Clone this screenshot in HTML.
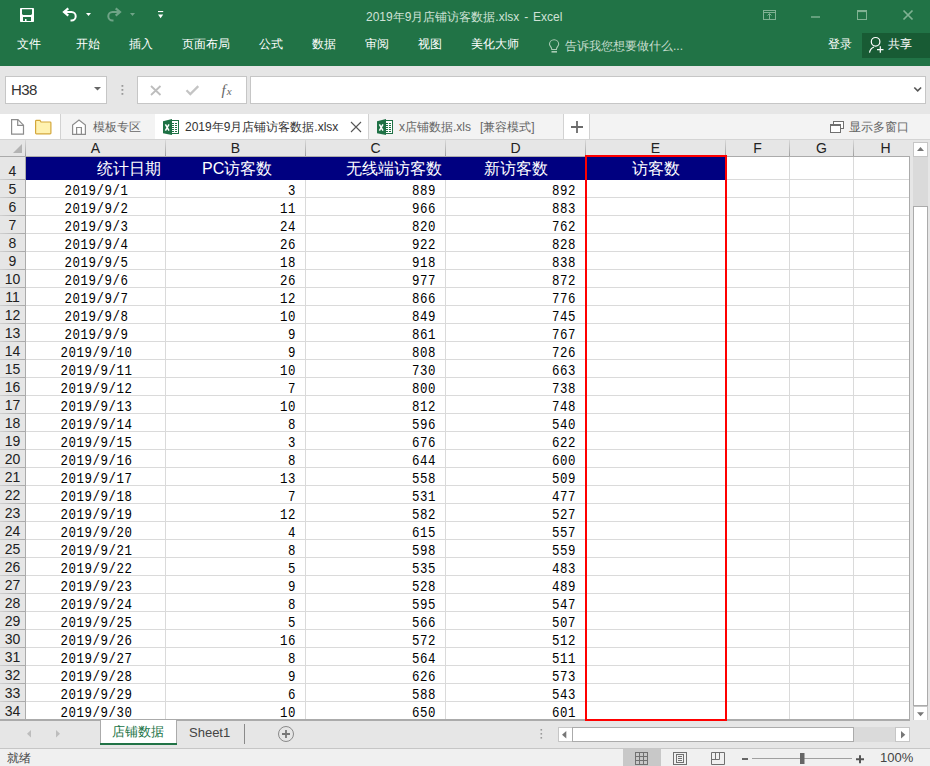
<!DOCTYPE html>
<html><head><meta charset="utf-8"><style>
*{margin:0;padding:0;box-sizing:border-box}
html,body{width:930px;height:766px;overflow:hidden;background:#e6e6e6;font-family:"Liberation Sans",sans-serif;position:relative}
div,span,svg{position:absolute}
#titlebar{left:0;top:0;width:930px;height:66px;background:#217346}
.title{left:366px;top:9px;font-size:12px;word-spacing:1.5px;color:#cfe2d6;white-space:nowrap;line-height:16px}
.rtab{top:36px;font-size:12px;color:#fff;white-space:nowrap;line-height:17px}
.tell{left:565px;top:38px;font-size:12px;color:#c7ddcf;white-space:nowrap;line-height:17px}
#share{left:862px;top:33px;width:68px;height:25px;background:#185b34}
.box{background:#fff;border:1px solid #c6c6c6}
#tabs{left:0;top:114px;width:930px;height:25px;background:#f3f3f3}
.tb{top:114px;height:25px}
.dt{top:115px;height:25px;white-space:nowrap;font-size:12px;color:#666;line-height:25px}
.tsep{top:114px;width:1px;height:25px;background:#d2d2d2}
.colhdr{left:0;top:139px;width:910px;height:18px;background:#e6e6e6;border-top:1px solid #d4d4d4;border-bottom:1px solid #ababab}
.ch{top:140px;height:16px;text-align:center;font-size:14px;line-height:16px;color:#222}
.chsep{top:140px;width:1px;height:16px;background:linear-gradient(#d8d8d8,#a0a0a0)}
.rh{left:0;width:25px;height:17px;text-align:center;font-size:14px;line-height:18px;color:#222}
.rhsep{left:0;width:25px;height:1px;background:linear-gradient(90deg,#d0d0d0,#a8a8a8)}
.rhcol{left:0;top:157px;width:26px;height:563px;background:#e6e6e6;border-right:1px solid #ababab}
.cells{left:26px;top:157px;width:884px;height:563px;background:#fff}
.hl{left:26px;width:883px;height:1px;background:#dadada}
.vl{top:157px;width:1px;height:562px;background:#dadada}
.navy{left:26px;top:157px;width:699px;height:23px;background:#000080}
.ht{top:159px;font-size:16px;line-height:20px;color:#fff;white-space:nowrap}
.cell{height:17px;margin-top:2px;font-family:"Liberation Mono",monospace;font-size:14.6px;line-height:18px;letter-spacing:0.65px;color:#000;transform:scaleX(0.85);white-space:nowrap}
.ca{left:27px;width:139px;text-align:center;transform-origin:center}
.cb{left:166px;width:130px;text-align:right;transform-origin:right}
.cc{left:306px;width:130px;text-align:right;transform-origin:right}
.cd{left:446px;width:130px;text-align:right;transform-origin:right}
.sel{left:585px;top:155px;width:142px;height:566px;border:2px solid #ff0000}
.gridborder{left:909px;top:156px;width:1px;height:564px;background:#ababab}

</style></head><body>
<div id="titlebar"></div>
<div class="title">2019年9月店铺访客数据.xlsx - Excel</div>
<div class="rtab" style="left:17px">文件</div>
<div class="rtab" style="left:76px">开始</div>
<div class="rtab" style="left:129px">插入</div>
<div class="rtab" style="left:182px">页面布局</div>
<div class="rtab" style="left:259px">公式</div>
<div class="rtab" style="left:312px">数据</div>
<div class="rtab" style="left:365px">审阅</div>
<div class="rtab" style="left:418px">视图</div>
<div class="rtab" style="left:471px">美化大师</div>
<div class="tell">告诉我您想要做什么...</div>
<div class="rtab" style="left:828px">登录</div>
<div id="share"></div>
<div class="rtab" style="left:888px">共享</div>
<!-- formula bar -->
<div class="box" style="left:5px;top:76px;width:102px;height:28px"></div>
<div style="left:11px;top:81px;font-size:15px;line-height:18px;letter-spacing:-0.6px;color:#333">H38</div>
<div class="box" style="left:137px;top:76px;width:110px;height:28px"></div>
<div class="box" style="left:250px;top:76px;width:676px;height:28px"></div>
<!-- tabs -->
<div id="tabs"></div>
<div class="tb" style="left:0;width:60px;background:#fff"></div>
<div class="tsep" style="left:60px"></div>
<div class="tb" style="left:155px;width:213px;background:#fff"></div>
<div class="tsep" style="left:368px"></div>
<div class="tsep" style="left:563px"></div>
<div class="tb" style="left:564px;width:25px;background:#fff"></div>
<div class="tsep" style="left:589px"></div>
<div class="dt" style="left:93px">模板专区</div>
<div class="dt" style="left:185px;color:#333">2019年9月店铺访客数据.xlsx</div>
<div class="dt" style="left:399px">x店铺数据.xls</div><div class="dt" style="left:480px">[兼容模式]</div>
<div class="dt" style="left:849px">显示多窗口</div>
<svg style="left:0;top:0" width="930" height="140" viewBox="0 0 930 140">
 <!-- save -->
 <rect x="20" y="8" width="14" height="14" rx="0.8" fill="#fff"/>
 <path fill="#217346" d="M22 9.2h10v4.8l-1 1h-8l-1-1z"/>
 <path fill="#217346" d="M23 17h8v4h-4.5v-2h-1.5v2H23z"/>
 <!-- undo -->
 <path d="M68.3 8.3L64 12L68.3 15.7" fill="none" stroke="#fff" stroke-width="2.2" stroke-linejoin="miter"/>
 <path d="M64.5 12H71.5A4.2 4.2 0 0 1 71.5 20.4H70.5" fill="none" stroke="#fff" stroke-width="2"/>
 <path d="M86 13h5l-2.5 3z" fill="#fff"/>
 <!-- redo -->
 <g opacity="0.35">
 <path d="M115.7 8.3L120 12L115.7 15.7" fill="none" stroke="#fff" stroke-width="2.2"/>
 <path d="M119.5 12H112.5A4.2 4.2 0 0 0 112.5 20.4H113.5" fill="none" stroke="#fff" stroke-width="2"/>
 <path d="M130 13h5l-2.5 3z" fill="#fff"/>
 </g>
 <!-- customize -->
 <rect x="158" y="11" width="5.2" height="1.1" fill="#fff"/>
 <path d="M158 14.6h5.2l-2.6 3.6z" fill="#fff"/>
 <!-- window controls -->
 <g fill="none" stroke="#80b293" stroke-width="1">
  <rect x="763.5" y="10.5" width="12" height="9"/>
  <path d="M763.5 12.5h12M769.5 14v6M767.5 15.5l2-2 2 2"/>
  <rect x="857.5" y="10.5" width="9" height="9"/>
  <path d="M857.5 11.3h9" stroke-width="1.6"/>
  <path d="M903.5 10.5l9 9M912.5 10.5l-9 9" stroke-width="1.7"/>
 </g>
 <rect x="811" y="16.3" width="9" height="1.4" fill="#80b293"/>
 <!-- lightbulb -->
 <g fill="none" stroke="#a9cbb5" stroke-width="1.1">
  <path d="M551.8 49.5C551.8 47 549.5 46 549.5 44.3A4.6 4.6 0 0 1 558.7 44.3C558.7 46 556.4 47 556.4 49.5z"/>
 </g>
 <rect x="551.5" y="51" width="5.5" height="1.6" fill="#a9cbb5"/>
 <!-- person -->
 <g fill="none" stroke="#fff" stroke-width="1.2">
  <circle cx="875.6" cy="41.8" r="4.3"/>
  <path d="M869.5 52.6A7.5 7.5 0 0 1 874 47"/>
  <path d="M877 49.6h6.5M880.3 46.3v6.5"/>
 </g>
 <!-- namebox arrow -->
 <path d="M94 87h7l-3.5 3.5z" fill="#666"/>
 <!-- dots -->
 <rect x="121.5" y="85" width="1.8" height="1.8" fill="#999"/>
 <rect x="121.5" y="89" width="1.8" height="1.8" fill="#999"/>
 <rect x="121.5" y="93" width="1.8" height="1.8" fill="#999"/>
 <!-- cancel / enter -->
 <path d="M151 86l9.5 9M160.5 86l-9.5 9" stroke="#bdbdbd" stroke-width="1.8" fill="none"/>
 <path d="M186.5 90.3l3.8 3.8l8-8" stroke="#c4c4c4" stroke-width="2.2" fill="none"/>
 <text x="221.5" y="94.5" font-family="Liberation Serif" font-style="italic" font-size="15" fill="#666">f</text>
 <text x="226.8" y="95" font-family="Liberation Serif" font-style="italic" font-size="11" fill="#666">x</text>
 <!-- chevron -->
 <path d="M914.3 87.5l3.4 3.4l3.4-3.4" stroke="#555" stroke-width="1.6" fill="none"/>
 <!-- new doc -->
 <path d="M11.6 119.6h6.3l5.6 5.6v9H11.6z" fill="#fff" stroke="#8c8c8c" stroke-width="1.2"/>
 <path d="M17.7 119.6v5.7h5.8" fill="none" stroke="#8c8c8c" stroke-width="1.2"/>
 <!-- folder -->
 <path d="M35.6 121.2a0.8 0.8 0 0 1 0.8-0.8h3.6l1 1.6h9.1a0.8 0.8 0 0 1 0.8 0.8v10.2a0.8 0.8 0 0 1-0.8 0.8H36.4a0.8 0.8 0 0 1-0.8-0.8z" fill="#fff2b0" stroke="#d4a73a" stroke-width="1.2"/>
 <!-- home -->
 <path d="M72.6 134.3V125.1L79 120l6.4 5.1v9.2z" fill="#fff" stroke="#8c8c8c" stroke-width="1.2"/>
 <path d="M76.6 134.3v-6.8h4.8v6.8" fill="none" stroke="#8c8c8c" stroke-width="1.2"/>
 <!-- excel icons -->
 <g>
  <rect x="171" y="120" width="8" height="14" fill="#1e7145"/>
  <rect x="172" y="121" width="6" height="12" fill="#fff"/>
  <g fill="#1e7145"><rect x="172" y="123" width="2" height="1"/><rect x="175" y="123" width="2" height="1"/><rect x="172" y="125" width="2" height="1"/><rect x="175" y="125" width="2" height="1"/><rect x="172" y="127" width="2" height="1"/><rect x="175" y="127" width="2" height="1"/><rect x="172" y="129" width="2" height="1"/><rect x="175" y="129" width="2" height="1"/><rect x="172" y="131" width="2" height="1"/><rect x="175" y="131" width="2" height="1"/></g>
  <path d="M163 121.3L172 119v16l-9-1.8z" fill="#1e7145"/>
  <path d="M165.4 124.3l3.6 6.4M169 124.3l-3.6 6.4" stroke="#fff" stroke-width="1.5" fill="none"/>
 </g>
 <g transform="translate(214 0)">
  <rect x="171" y="120" width="8" height="14" fill="#1e7145"/>
  <rect x="172" y="121" width="6" height="12" fill="#fff"/>
  <g fill="#1e7145"><rect x="172" y="123" width="2" height="1"/><rect x="175" y="123" width="2" height="1"/><rect x="172" y="125" width="2" height="1"/><rect x="175" y="125" width="2" height="1"/><rect x="172" y="127" width="2" height="1"/><rect x="175" y="127" width="2" height="1"/><rect x="172" y="129" width="2" height="1"/><rect x="175" y="129" width="2" height="1"/><rect x="172" y="131" width="2" height="1"/><rect x="175" y="131" width="2" height="1"/></g>
  <path d="M163 121.3L172 119v16l-9-1.8z" fill="#1e7145"/>
  <path d="M165.4 124.3l3.6 6.4M169 124.3l-3.6 6.4" stroke="#fff" stroke-width="1.5" fill="none"/>
 </g>
 
 <!-- close tab -->
 <path d="M351 122l10 10M361 122l-10 10" stroke="#555" stroke-width="1.1" fill="none"/>
 <!-- plus tab -->
 <path d="M571 127h12M577 121v12" stroke="#6b6b6b" stroke-width="1.8" fill="none"/>
 <!-- restore windows -->
 <rect x="833.5" y="121.5" width="10" height="7" fill="#fff" stroke="#707070" stroke-width="1"/>
 <rect x="830.5" y="124.5" width="10" height="8" fill="#fff" stroke="#707070" stroke-width="1"/>
 <rect x="830" y="124" width="11" height="2" fill="#707070"/>
 <!-- corner triangle -->
 <path d="M13 153h9v-9z" fill="#b4b4b4"/>
</svg>

<div class="colhdr"></div>
<div class="rhcol"></div>
<div class="cells"></div>
<div class="chsep" style="left:25px"></div>
<div class="ch" style="left:26px;width:139px">A</div>
<div class="chsep" style="left:165px"></div>
<div class="ch" style="left:166px;width:139px">B</div>
<div class="chsep" style="left:305px"></div>
<div class="ch" style="left:306px;width:139px">C</div>
<div class="chsep" style="left:445px"></div>
<div class="ch" style="left:446px;width:139px">D</div>
<div class="chsep" style="left:585px"></div>
<div class="ch" style="left:586px;width:139px">E</div>
<div class="chsep" style="left:725px"></div>
<div class="ch" style="left:726px;width:63px">F</div>
<div class="chsep" style="left:789px"></div>
<div class="ch" style="left:790px;width:63px">G</div>
<div class="chsep" style="left:853px"></div>
<div class="ch" style="left:854px;width:63px">H</div>
<div class="rh" style="top:157px;height:22px;line-height:28px">4</div>
<div class="rhsep" style="top:179px"></div>
<div class="rh" style="top:180px">5</div>
<div class="rhsep" style="top:197px"></div>
<div class="rh" style="top:198px">6</div>
<div class="rhsep" style="top:215px"></div>
<div class="rh" style="top:216px">7</div>
<div class="rhsep" style="top:233px"></div>
<div class="rh" style="top:234px">8</div>
<div class="rhsep" style="top:251px"></div>
<div class="rh" style="top:252px">9</div>
<div class="rhsep" style="top:269px"></div>
<div class="rh" style="top:270px">10</div>
<div class="rhsep" style="top:287px"></div>
<div class="rh" style="top:288px">11</div>
<div class="rhsep" style="top:305px"></div>
<div class="rh" style="top:306px">12</div>
<div class="rhsep" style="top:323px"></div>
<div class="rh" style="top:324px">13</div>
<div class="rhsep" style="top:341px"></div>
<div class="rh" style="top:342px">14</div>
<div class="rhsep" style="top:359px"></div>
<div class="rh" style="top:360px">15</div>
<div class="rhsep" style="top:377px"></div>
<div class="rh" style="top:378px">16</div>
<div class="rhsep" style="top:395px"></div>
<div class="rh" style="top:396px">17</div>
<div class="rhsep" style="top:413px"></div>
<div class="rh" style="top:414px">18</div>
<div class="rhsep" style="top:431px"></div>
<div class="rh" style="top:432px">19</div>
<div class="rhsep" style="top:449px"></div>
<div class="rh" style="top:450px">20</div>
<div class="rhsep" style="top:467px"></div>
<div class="rh" style="top:468px">21</div>
<div class="rhsep" style="top:485px"></div>
<div class="rh" style="top:486px">22</div>
<div class="rhsep" style="top:503px"></div>
<div class="rh" style="top:504px">23</div>
<div class="rhsep" style="top:521px"></div>
<div class="rh" style="top:522px">24</div>
<div class="rhsep" style="top:539px"></div>
<div class="rh" style="top:540px">25</div>
<div class="rhsep" style="top:557px"></div>
<div class="rh" style="top:558px">26</div>
<div class="rhsep" style="top:575px"></div>
<div class="rh" style="top:576px">27</div>
<div class="rhsep" style="top:593px"></div>
<div class="rh" style="top:594px">28</div>
<div class="rhsep" style="top:611px"></div>
<div class="rh" style="top:612px">29</div>
<div class="rhsep" style="top:629px"></div>
<div class="rh" style="top:630px">30</div>
<div class="rhsep" style="top:647px"></div>
<div class="rh" style="top:648px">31</div>
<div class="rhsep" style="top:665px"></div>
<div class="rh" style="top:666px">32</div>
<div class="rhsep" style="top:683px"></div>
<div class="rh" style="top:684px">33</div>
<div class="rhsep" style="top:701px"></div>
<div class="rh" style="top:702px">34</div>
<div class="rhsep" style="top:719px"></div>
<div class="hl" style="top:179px"></div>
<div class="hl" style="top:197px"></div>
<div class="hl" style="top:215px"></div>
<div class="hl" style="top:233px"></div>
<div class="hl" style="top:251px"></div>
<div class="hl" style="top:269px"></div>
<div class="hl" style="top:287px"></div>
<div class="hl" style="top:305px"></div>
<div class="hl" style="top:323px"></div>
<div class="hl" style="top:341px"></div>
<div class="hl" style="top:359px"></div>
<div class="hl" style="top:377px"></div>
<div class="hl" style="top:395px"></div>
<div class="hl" style="top:413px"></div>
<div class="hl" style="top:431px"></div>
<div class="hl" style="top:449px"></div>
<div class="hl" style="top:467px"></div>
<div class="hl" style="top:485px"></div>
<div class="hl" style="top:503px"></div>
<div class="hl" style="top:521px"></div>
<div class="hl" style="top:539px"></div>
<div class="hl" style="top:557px"></div>
<div class="hl" style="top:575px"></div>
<div class="hl" style="top:593px"></div>
<div class="hl" style="top:611px"></div>
<div class="hl" style="top:629px"></div>
<div class="hl" style="top:647px"></div>
<div class="hl" style="top:665px"></div>
<div class="hl" style="top:683px"></div>
<div class="hl" style="top:701px"></div>
<div class="vl" style="left:165px"></div>
<div class="vl" style="left:305px"></div>
<div class="vl" style="left:445px"></div>
<div class="vl" style="left:585px"></div>
<div class="vl" style="left:725px"></div>
<div class="vl" style="left:789px"></div>
<div class="vl" style="left:853px"></div>
<div class="navy"></div>
<div class="ht" style="left:97px">统计日期</div>
<div class="ht" style="left:202px">PC访客数</div>
<div class="ht" style="left:346px">无线端访客数</div>
<div class="ht" style="left:484px">新访客数</div>
<div class="ht" style="left:632px">访客数</div>
<div class="cell ca" style="top:180px">2019/9/1</div>
<div class="cell cb" style="top:180px">3</div>
<div class="cell cc" style="top:180px">889</div>
<div class="cell cd" style="top:180px">892</div>
<div class="cell ca" style="top:198px">2019/9/2</div>
<div class="cell cb" style="top:198px">11</div>
<div class="cell cc" style="top:198px">966</div>
<div class="cell cd" style="top:198px">883</div>
<div class="cell ca" style="top:216px">2019/9/3</div>
<div class="cell cb" style="top:216px">24</div>
<div class="cell cc" style="top:216px">820</div>
<div class="cell cd" style="top:216px">762</div>
<div class="cell ca" style="top:234px">2019/9/4</div>
<div class="cell cb" style="top:234px">26</div>
<div class="cell cc" style="top:234px">922</div>
<div class="cell cd" style="top:234px">828</div>
<div class="cell ca" style="top:252px">2019/9/5</div>
<div class="cell cb" style="top:252px">18</div>
<div class="cell cc" style="top:252px">918</div>
<div class="cell cd" style="top:252px">838</div>
<div class="cell ca" style="top:270px">2019/9/6</div>
<div class="cell cb" style="top:270px">26</div>
<div class="cell cc" style="top:270px">977</div>
<div class="cell cd" style="top:270px">872</div>
<div class="cell ca" style="top:288px">2019/9/7</div>
<div class="cell cb" style="top:288px">12</div>
<div class="cell cc" style="top:288px">866</div>
<div class="cell cd" style="top:288px">776</div>
<div class="cell ca" style="top:306px">2019/9/8</div>
<div class="cell cb" style="top:306px">10</div>
<div class="cell cc" style="top:306px">849</div>
<div class="cell cd" style="top:306px">745</div>
<div class="cell ca" style="top:324px">2019/9/9</div>
<div class="cell cb" style="top:324px">9</div>
<div class="cell cc" style="top:324px">861</div>
<div class="cell cd" style="top:324px">767</div>
<div class="cell ca" style="top:342px">2019/9/10</div>
<div class="cell cb" style="top:342px">9</div>
<div class="cell cc" style="top:342px">808</div>
<div class="cell cd" style="top:342px">726</div>
<div class="cell ca" style="top:360px">2019/9/11</div>
<div class="cell cb" style="top:360px">10</div>
<div class="cell cc" style="top:360px">730</div>
<div class="cell cd" style="top:360px">663</div>
<div class="cell ca" style="top:378px">2019/9/12</div>
<div class="cell cb" style="top:378px">7</div>
<div class="cell cc" style="top:378px">800</div>
<div class="cell cd" style="top:378px">738</div>
<div class="cell ca" style="top:396px">2019/9/13</div>
<div class="cell cb" style="top:396px">10</div>
<div class="cell cc" style="top:396px">812</div>
<div class="cell cd" style="top:396px">748</div>
<div class="cell ca" style="top:414px">2019/9/14</div>
<div class="cell cb" style="top:414px">8</div>
<div class="cell cc" style="top:414px">596</div>
<div class="cell cd" style="top:414px">540</div>
<div class="cell ca" style="top:432px">2019/9/15</div>
<div class="cell cb" style="top:432px">3</div>
<div class="cell cc" style="top:432px">676</div>
<div class="cell cd" style="top:432px">622</div>
<div class="cell ca" style="top:450px">2019/9/16</div>
<div class="cell cb" style="top:450px">8</div>
<div class="cell cc" style="top:450px">644</div>
<div class="cell cd" style="top:450px">600</div>
<div class="cell ca" style="top:468px">2019/9/17</div>
<div class="cell cb" style="top:468px">13</div>
<div class="cell cc" style="top:468px">558</div>
<div class="cell cd" style="top:468px">509</div>
<div class="cell ca" style="top:486px">2019/9/18</div>
<div class="cell cb" style="top:486px">7</div>
<div class="cell cc" style="top:486px">531</div>
<div class="cell cd" style="top:486px">477</div>
<div class="cell ca" style="top:504px">2019/9/19</div>
<div class="cell cb" style="top:504px">12</div>
<div class="cell cc" style="top:504px">582</div>
<div class="cell cd" style="top:504px">527</div>
<div class="cell ca" style="top:522px">2019/9/20</div>
<div class="cell cb" style="top:522px">4</div>
<div class="cell cc" style="top:522px">615</div>
<div class="cell cd" style="top:522px">557</div>
<div class="cell ca" style="top:540px">2019/9/21</div>
<div class="cell cb" style="top:540px">8</div>
<div class="cell cc" style="top:540px">598</div>
<div class="cell cd" style="top:540px">559</div>
<div class="cell ca" style="top:558px">2019/9/22</div>
<div class="cell cb" style="top:558px">5</div>
<div class="cell cc" style="top:558px">535</div>
<div class="cell cd" style="top:558px">483</div>
<div class="cell ca" style="top:576px">2019/9/23</div>
<div class="cell cb" style="top:576px">9</div>
<div class="cell cc" style="top:576px">528</div>
<div class="cell cd" style="top:576px">489</div>
<div class="cell ca" style="top:594px">2019/9/24</div>
<div class="cell cb" style="top:594px">8</div>
<div class="cell cc" style="top:594px">595</div>
<div class="cell cd" style="top:594px">547</div>
<div class="cell ca" style="top:612px">2019/9/25</div>
<div class="cell cb" style="top:612px">5</div>
<div class="cell cc" style="top:612px">566</div>
<div class="cell cd" style="top:612px">507</div>
<div class="cell ca" style="top:630px">2019/9/26</div>
<div class="cell cb" style="top:630px">16</div>
<div class="cell cc" style="top:630px">572</div>
<div class="cell cd" style="top:630px">512</div>
<div class="cell ca" style="top:648px">2019/9/27</div>
<div class="cell cb" style="top:648px">8</div>
<div class="cell cc" style="top:648px">564</div>
<div class="cell cd" style="top:648px">511</div>
<div class="cell ca" style="top:666px">2019/9/28</div>
<div class="cell cb" style="top:666px">9</div>
<div class="cell cc" style="top:666px">626</div>
<div class="cell cd" style="top:666px">573</div>
<div class="cell ca" style="top:684px">2019/9/29</div>
<div class="cell cb" style="top:684px">6</div>
<div class="cell cc" style="top:684px">588</div>
<div class="cell cd" style="top:684px">543</div>
<div class="cell ca" style="top:702px">2019/9/30</div>
<div class="cell cb" style="top:702px">10</div>
<div class="cell cc" style="top:702px">650</div>
<div class="cell cd" style="top:702px">601</div>
<div class="gridborder"></div>
<div class="sel"></div>
<!-- vertical scrollbar -->
<div style="left:910px;top:139px;width:20px;height:581px;background:#e6e6e6;border-top:1px solid #d4d4d4"></div>
<div style="left:913px;top:157px;width:15px;height:549px;background:#dadada"></div>
<div style="left:913px;top:142px;width:15px;height:15px;background:#fff;border:1px solid #c6c6c6"></div>
<div style="left:913px;top:206px;width:15px;height:500px;background:#fff;border:1px solid #ababab"></div>
<div style="left:913px;top:706px;width:15px;height:15px;background:#fff;border:1px solid #c6c6c6"></div>
<!-- sheet tab bar -->
<div style="left:0;top:720px;width:930px;height:28px;background:#e6e6e6"></div>
<div style="left:0;top:719px;width:910px;height:2px;background:#ababab"></div>
<div style="left:100px;top:720px;width:77px;height:25px;background:#fff;border:1px solid #ababab;border-top:none"></div>
<div style="left:100px;top:743px;width:77px;height:2px;background:#217346"></div>
<div style="left:112px;top:723px;font-size:13px;line-height:18px;color:#217346">店铺数据</div>
<div style="left:189px;top:724px;font-size:13px;line-height:18px;color:#444">Sheet1</div>
<div style="left:244px;top:724px;width:1px;height:20px;background:#8a8a8a"></div>
<!-- h scrollbar -->
<div style="left:558px;top:727px;width:352px;height:15px;background:#dadada"></div>
<div style="left:558px;top:727px;width:15px;height:15px;background:#fff;border:1px solid #c6c6c6"></div>
<div style="left:572px;top:727px;width:282px;height:15px;background:#fff;border:1px solid #ababab"></div>
<div style="left:895px;top:727px;width:15px;height:15px;background:#fff;border:1px solid #c6c6c6"></div>
<!-- status bar -->
<div style="left:0;top:748px;width:930px;height:18px;background:#f0f0f0;border-top:1px solid #c6c6c6"></div>
<div style="left:623px;top:749px;width:38px;height:17px;background:#c8c8c8"></div>
<div style="left:7px;top:750px;font-size:12px;line-height:16px;color:#444">就绪</div>
<div style="left:880px;top:750px;font-size:13px;line-height:16px;color:#444">100%</div>
<svg style="left:0;top:135px" width="930" height="631" viewBox="0 135 930 631">
 <path d="M13 153h9v-9z" fill="#b4b4b4"/>
 <path d="M917 151h7l-3.5-4z" fill="#777"/>
 <path d="M917 712.2h7l-3.5 4z" fill="#777"/>
 <path d="M31 730v7.5l-4-3.75z" fill="#bdbdbd"/>
 <path d="M56 730v7.5l4-3.75z" fill="#bdbdbd"/>
 <circle cx="286" cy="734" r="7.5" fill="none" stroke="#8a8a8a" stroke-width="1"/>
 <path d="M282 734h8M286 730v8" stroke="#777" stroke-width="1.8"/>
 <rect x="540.5" y="729" width="1.6" height="1.6" fill="#999"/>
 <rect x="540.5" y="733" width="1.6" height="1.6" fill="#999"/>
 <rect x="540.5" y="737" width="1.6" height="1.6" fill="#999"/>
 <path d="M566.3 731v7.5l-4.3-3.75z" fill="#777"/>
 <path d="M901 731v7.5l4.3-3.75z" fill="#777"/>
 <!-- view icons -->
 <g fill="none" stroke="#707070" stroke-width="1">
  <rect x="635.5" y="752.5" width="12" height="12"/>
  <path d="M635.5 756.5h12M635.5 760.5h12M639.5 752.5v12M643.5 752.5v12"/>
  <rect x="673.5" y="752.5" width="13" height="12"/>
  <rect x="676.5" y="754.5" width="7" height="8"/>
  <path d="M678 756.5h4M678 758.5h4M678 760.5h4"/>
  <path d="M711.5 752.5h13v12h-13zM711.5 759.5h8v-7M715.5 752.5v7"/>
 </g>
 <rect x="742" y="758" width="6" height="2" fill="#666"/>
 <rect x="752" y="758" width="100" height="1" fill="#a0a0a0"/>
 <rect x="800" y="753" width="4.5" height="11" fill="#666"/>
 <path d="M856 759.2h8M860 755.2v8" stroke="#555" stroke-width="2"/>
</svg>
<div class="sel"></div>

</body></html>
